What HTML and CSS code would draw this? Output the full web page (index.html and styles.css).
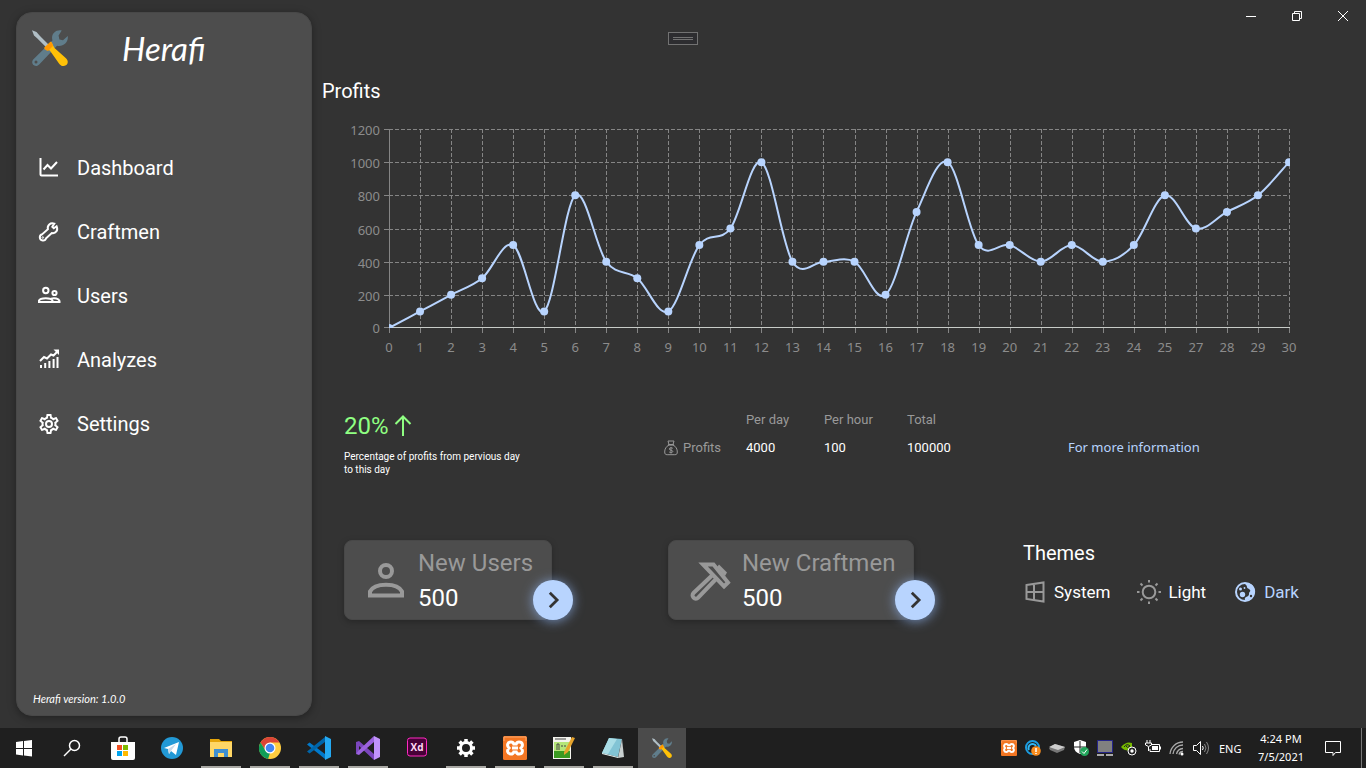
FILE: index.html
```html
<!DOCTYPE html>
<html lang="en">
<head>
<meta charset="utf-8">
<title>Herafi</title>
<link rel="stylesheet" href="styles.css">
</head>
<body>
<svg class="defs" aria-hidden="true">
  <symbol id="tools" viewBox="0 0 36 36">
    <path d="M29.7.4C23.500-.8 18.500 4.500 20.500 10.500L1.200 29.600C-.8 32 .2 35.800 4 36c1.400 0 2.300-.6 3.200-1.500L25 15.700c6 1.400 11.600-3.300 10.800-9.700L31 10.300l-3.600-.9-.8-3.900z" fill="#607d8b"/>
    <circle cx="4" cy="32" r="1.500" fill="#4d4d4d"/>
    <path d="M0 .3L4.500 2 8 6l9 9-2.600 2.600-9-9L2 5.500z" fill="#b0bec5"/>
    <path d="M12.500 17.500l6.500-6 3.500 6.500L33.700 28c3.600 3 2.200 7.600-2 8-2 .1-3.500-.8-4.700-2.600L18 20.800z" fill="#ffc107"/>
    <path d="M12.200 17.800L18.500 11.800c1.500.4 2.200 2.400 2.400 4.200l-4.800 4.900c-2-.3-3.800-1.300-3.900-3.100z" fill="#ff9800"/>
  </symbol>
  <symbol id="xampp" viewBox="0 0 24 24">
    <rect width="24" height="24" rx="1.500" fill="#f37623"/>
    <path d="M1 5V1h22v4" fill="none" stroke="#f9a66c"/>
    <path d="M8 6c-3.800 0-4.300 3.800-2 6-2.300 2.200-1.800 6 2 6 2.200 0 2.800-2 2.800-2h2.400s.6 2 2.800 2c3.800 0 4.300-3.800 2-6 2.300-2.200 1.800-6-2-6-2.200 0-2.800 2-2.800 2h-2.400S10.200 6 8 6zM9 12h6" fill="none" stroke="#fff" stroke-width="3"/>
  </symbol>
  <symbol id="chevron" viewBox="0 0 24 24"><path d="M8.500 4l8 8-8 8" fill="none" stroke="#333" stroke-width="3"/></symbol>
</svg>

<div class="app">
  <aside class="sidebar">
    <div class="brand">
      <svg class="brand-logo"><use href="#tools"/></svg>
      <h1 class="brand-name">Herafi</h1>
    </div>
    <nav class="menu">
      <a class="menu-item" href="#dashboard">
        <svg class="icon" viewBox="0 0 24 24"><path d="M3.500 2v16.500a1 1 0 0 0 1 1H21" stroke-width="2"/><path d="M6.500 13.500l4-4.500 3.500 3.500 6-6.500" stroke-width="2"/></svg>
        <span>Dashboard</span></a>
      <a class="menu-item" href="#craftmen">
        <svg class="icon" viewBox="0 0 24 24"><path d="M19.600 6.300L16.800 8.300 15.300 6.800 17.300 3.600c-4-1.200-7.300 1.600-6.400 5.600L5.300 14.200a3.200 3.200 0 1 0 3.800 4L14.800 13c4 .8 6.600-2.700 4.800-6.700z" stroke-width="2"/><circle cx="5.800" cy="17.500" r=".8"/></svg>
        <span>Craftmen</span></a>
      <a class="menu-item" href="#users">
        <svg class="icon" viewBox="0 0 24 24"><circle cx="8.800" cy="6.500" r="2.700" stroke-width="2"/><circle cx="17.500" cy="9" r="2.100" stroke-width="2"/><path d="M2 18v-1.300c1.200-3.400 12.300-3.400 13.500 0v1.300zM15.500 18H22.500v-1c-.6-2.600-5-3.400-8.500-2.400" stroke-width="2"/></svg>
        <span>Users</span></a>
      <a class="menu-item" href="#analyzes">
        <svg class="icon" viewBox="0 0 24 24"><path d="M4 20v-3M8.200 20v-5M12.400 20v-7M16.600 20V11M20.500 20V9" stroke-width="2"/><path d="M3 13l4-4 3 1.500 4-4 2.500 1 4-4" stroke-width="2"/><path d="M16.500 1.500H22V7z" class="solid"/></svg>
        <span>Analyzes</span></a>
      <a class="menu-item" href="#settings">
        <svg class="icon" viewBox="0 0 24 24"><path class="solid" d="M12 8a4 4 0 0 1 4 4 4 4 0 0 1-4 4 4 4 0 0 1-4-4 4 4 0 0 1 4-4m0 2a2 2 0 0 0-2 2 2 2 0 0 0 2 2 2 2 0 0 0 2-2 2 2 0 0 0-2-2m-2 12c-.25 0-.46-.18-.5-.42l-.37-2.650c-.63-.25-1.170-.59-1.690-.99l-2.490 1.010c-.22.08-.49 0-.61-.22l-2-3.460c-.13-.22-.07-.49.12-.64l2.110-1.660L4.500 12l.07-1-2.110-1.630c-.19-.15-.25-.42-.12-.64l2-3.460c.12-.22.39-.31.61-.22l2.490 1c.52-.39 1.060-.73 1.690-.98l.37-2.650c.04-.24.25-.42.5-.42h4c.25 0 .46.18.5.42l.37 2.650c.63.25 1.170.59 1.690.98l2.490-1c.22-.09.49 0 .61.22l2 3.460c.13.22.07.49-.12.64L19.430 11l.07 1-.07 1 2.110 1.630c.19.15.25.42.12.64l-2 3.460c-.12.22-.39.31-.61.22l-2.490-1c-.52.39-1.060.73-1.690.98l-.37 2.650c-.04.24-.25.42-.5.42h-4m1.250-18-.37 2.610c-1.200.25-2.260.89-3.030 1.780L5.440 7.350l-.75 1.300L6.800 10.200a5.550 5.550 0 0 0 0 3.600l-2.120 1.560.75 1.300 2.430-1.040c.77.88 1.820 1.520 3.010 1.760l.37 2.620h1.520l.37-2.610c1.190-.25 2.240-.89 3.010-1.770l2.430 1.040.75-1.300-2.120-1.550c.4-1.170.4-2.440 0-3.610l2.110-1.550-.75-1.300-2.410 1.040a5.420 5.420 0 0 0-3.030-1.770L12.750 4h-1.500z"/></svg>
        <span>Settings</span></a>
    </nav>
    <p class="version">Herafi version: 1.0.0</p>
  </aside>

  <div class="content">
    <header class="window-bar">
      <button class="window-button" aria-label="Minimize"><svg viewBox="0 0 12 12"><path d="M1 6.500h10"/></svg></button>
      <button class="window-button" aria-label="Restore"><svg viewBox="0 0 12 12"><path d="M1.500 3.500h7v7h-7zM3.500 3.500v-2h7v7h-2"/></svg></button>
      <button class="window-button" aria-label="Close"><svg viewBox="0 0 12 12"><path d="M1 1l10 10M11 1L1 11"/></svg></button>
    </header>

    <main class="dashboard">
      <h2 class="section-title">Profits</h2>
      <svg class="chart" id="chart" role="img" aria-label="Profits chart"></svg>

      <section class="stats">
        <div class="growth">
          <p class="growth-value">20% <svg viewBox="0 0 18 22"><path d="M9 21V2M1.500 9L9 1.500 16.500 9"/></svg></p>
          <p class="growth-note">Percentage of profits from pervious day to this day</p>
        </div>
        <table class="totals">
          <thead><tr><td></td><th scope="col">Per day</th><th scope="col">Per hour</th><th scope="col">Total</th></tr></thead>
          <tbody><tr>
            <th scope="row"><span class="row-label"><svg viewBox="0 0 14 16"><path d="M4 1h6L9 4.500H5zM5 5C2 6.500.7 9 .7 12c0 2 .8 2.700 2.500 2.700h7.600c1.700 0 2.500-.7 2.500-2.700 0-3-1.300-5.500-4.300-7zM4 4.700h6"/><path d="M8.800 8.300C7.500 7.400 5.300 7.800 5.300 9c0 1.500 3.500.9 3.500 2.400 0 1.300-2.300 1.600-3.600.6M7 7v6.500"/></svg>Profits</span></th>
            <td>4000</td><td>100</td><td>100000</td>
          </tr></tbody>
        </table>
        <a class="more" href="#more">For more information</a>
      </section>

      <section class="cards">
        <div class="cell">
          <article class="card">
            <svg class="card-icon" viewBox="0 0 42 42"><circle cx="21" cy="12" r="6"/><path d="M5 36.500v-4c4.500-9 27.500-9 32 0v4z"/></svg>
            <div><h3 class="card-title">New Users</h3><p class="card-value">500</p></div>
            <button class="card-go" aria-label="Open new users"><svg><use href="#chevron"/></svg></button>
          </article>
        </div>
        <div class="cell">
          <article class="card">
            <svg class="card-icon" viewBox="0 0 42 42"><path d="M23 16.500L4.500 34a3.300 3.300 0 0 0 4.700 4.700L27 20"/><path d="M14 5.500H24.500L39 23.500 35 27.500z"/><path class="solid" d="M28 8l2-2.500 8 8L36 17z"/></svg>
            <div><h3 class="card-title">New Craftmen</h3><p class="card-value">500</p></div>
            <button class="card-go" aria-label="Open new craftmen"><svg><use href="#chevron"/></svg></button>
          </article>
        </div>
        <fieldset class="themes">
          <legend class="section-title">Themes</legend>
          <div class="theme-list">
            <label class="theme"><input type="radio" name="theme"><svg class="theme-icon" viewBox="0 0 24 24"><path d="M3.500 5L20.500 2.500v19L3.500 19zM11 4v16M3.500 12h17"/></svg>System</label>
            <label class="theme"><input type="radio" name="theme"><svg class="theme-icon" viewBox="0 0 24 24"><circle cx="12" cy="12" r="6.300"/><path d="M12 0v2.500M12 21.500V24M0 12h2.500M21.500 12H24M3.500 3.500l2 2M18.500 18.500l2 2M3.500 20.500l2-2M18.500 5.500l2-2"/></svg>Light</label>
            <label class="theme"><input type="radio" name="theme" checked><svg class="theme-icon" viewBox="0 0 24 24"><circle cx="12" cy="12" r="9"/><path class="solid" d="M14 3c6 0 9 6 8 10-1 3-3 5.500-7 7-2 1-4 0-3-2s4-1 4-4 2-2 1-4-3-1-3-3-2-2-2-4z"/><circle cx="7.500" cy="9" r="1.500" class="solid"/><circle cx="9.500" cy="14.500" r="2.700" class="solid"/><circle cx="11.500" cy="8" r=".9" class="solid"/><circle cx="18" cy="16" r="1.200" class="hole"/></svg>Dark</label>
          </div>
        </fieldset>
      </section>
    </main>
  </div>
  <div class="drag-handle"></div>
</div>

<footer class="taskbar">
  <button class="task" aria-label="Start"><svg viewBox="0 0 24 24"><path fill="#fff" d="M4 6l7-1v7H4zM12 5l8-1v8h-8zM4 13h7v6.500l-7-1zM12 13h8v7.500L12 19.500z"/></svg></button>
  <button class="task" aria-label="Search"><svg viewBox="0 0 24 24"><g fill="none" stroke="#fff" stroke-width="1.500"><circle cx="14.500" cy="9.500" r="5"/><path d="M11 13l-7 7"/></g></svg></button>
  <div class="apps">
    <button class="task" aria-label="Store"><svg viewBox="0 0 24 24"><path d="M8 6V3q0-2 2-2h4q2 0 2 2v3" fill="none" stroke="#fff" stroke-width="1.500"/><path d="M0 6h24v16q0 2-2 2H2q-2 0-2-2z" fill="#fff"/><path d="M6 9h5v5H6z" fill="#f25022"/><path d="M12 9h5v5h-5z" fill="#7fba00"/><path d="M6 15h5v5H6z" fill="#00a4ef"/><path d="M12 15h5v5h-5z" fill="#ffb900"/></svg></button>
    <button class="task" aria-label="Telegram"><svg viewBox="0 0 24 24"><circle cx="12" cy="12" r="11" fill="#2299d6"/><path d="M4 12l15-6-3 13-5-4-2 3-1-5z" fill="#fff"/><path d="M8 13l8-5-5 7-2 3z" fill="#c8daea"/></svg></button>
    <button class="task open" aria-label="File Explorer"><svg viewBox="0 0 24 24"><path d="M1 3h9l2 2h11v16H1z" fill="#e5a50a"/><path d="M1 6h22v15H1z" fill="#ffd766"/><path d="M5 21v-8h14v8h-4v-4H9v4z" fill="#3f8fd2"/></svg></button>
    <button class="task open" aria-label="Chrome"><svg viewBox="0 0 24 24"><circle cx="12" cy="12" r="11" fill="#ffcd40"/><path d="M2.500 6.500A11 11 0 0 1 21.500 6.500H12L7.500 14.500z" fill="#db4437"/><path d="M2.500 6.500L7.500 14.500 12 17l-2 6A11 11 0 0 1 2.500 6.500z" fill="#0f9d58"/><circle cx="12" cy="12" r="5.500" fill="#fff"/><circle cx="12" cy="12" r="4.300" fill="#4285f4"/></svg></button>
    <button class="task open" aria-label="Visual Studio Code"><svg viewBox="0 0 24 24"><path d="M0 8.500l2.500-2L18 18v5z" fill="#0179cb"/><path d="M0 15.500l2.500 2L18 6V1z" fill="#0065a9"/><path d="M18 0l6 3v18l-6 3z" fill="#24a9f2"/></svg></button>
    <button class="task open" aria-label="Visual Studio"><svg viewBox="0 0 24 24"><path d="M0 6l3-1 15 13v6L3 10v6l-3 2z" fill="#7b46bd"/><path d="M0 18l3 1L18 6V0L3 14z" fill="#9b62de"/><path d="M18 0l6 3v18l-6 3z" fill="#c193fb"/></svg></button>
    <button class="task" aria-label="Adobe XD"><svg class="xd" viewBox="0 0 24 24"><rect x="2.500" y="2" width="19" height="18" rx="2.500" fill="#470137" stroke="#ff2bc2"/><text x="12" y="15">Xd</text></svg></button>
    <button class="task open" aria-label="Settings"><svg viewBox="0 0 24 24"><circle cx="12" cy="12" r="5.500" fill="none" stroke="#fff" stroke-width="3"/><path d="M12 3v3M12 18v3M3 12h3M18 12h3M5.600 5.600l2.200 2.200M16.200 16.200l2.200 2.200M5.600 18.400l2.200-2.200M16.200 7.800l2.200-2.200" stroke="#fff" stroke-width="3.500"/></svg></button>
    <button class="task open" aria-label="XAMPP"><svg><use href="#xampp"/></svg></button>
    <button class="task open" aria-label="Notepad++"><svg viewBox="0 0 24 24"><path d="M1 1h18v22H1z" fill="#f4f4ee"/><path d="M2 6h16v16H2z" fill="#b5e678"/><path d="M2 15h16v7H2z" fill="#3b9a21"/><path d="M3 3h11M5 14V8h2v6M9 10h2M12 10h2" fill="none" stroke="#444"/><path d="M12 16l8-15 3 1-7 14-4 3z" fill="#e6a32c"/></svg></button>
    <button class="task open" aria-label="Notepad"><svg viewBox="0 0 24 24"><path d="M8 2l13 1-4 18L1 17z" fill="#82c4d5"/><path d="M8 2l8 1-9 15-6-1z" fill="#a9dde6"/><path d="M21 3l2 18-6 1z" fill="#c9d0d0"/><path d="M1 17l16 4v1L1 18z" fill="#e8f4f4"/></svg></button>
    <button class="task active" aria-label="Herafi"><svg class="small"><use href="#tools"/></svg></button>
  </div>
  <div class="tray">
    <svg><use href="#xampp"/></svg>
    <svg viewBox="0 0 16 16"><circle cx="7.500" cy="7.500" r="6.500" fill="none" stroke="#1b9de2" stroke-width="2"/><path d="M4 10a4 4 0 1 1 7-4" fill="none" stroke="#2fb8f5" stroke-width="2"/><circle cx="11" cy="11" r="4.800" fill="#f78c1f"/><path d="M11 8v4M11 13v1" stroke="#fff" stroke-width="1.500"/></svg>
    <svg viewBox="0 0 16 16"><path d="M0 8l6-4 10 3-1 3-7 3-7-3z" fill="#777"/><path d="M0 7l6-3 10 3-7 3z" fill="#ccc"/></svg>
    <svg viewBox="0 0 16 16"><path d="M7 0l6 2v5q-1 5-6 7Q1 12 1 7V2z" fill="#fff"/><path d="M7 1v12M1 7h12" stroke="#222"/><circle cx="11.500" cy="11.500" r="4.500" fill="#22a55b"/><path d="M9 11.500l2 2 3-4" fill="none" stroke="#fff"/></svg>
    <svg viewBox="0 0 16 16"><path d="M.5.500h15v12H.5z" fill="#808080" stroke="#24248a"/><path d="M0 14h7v2H0zM9 14h7v2H9z" fill="#aaa"/></svg>
    <svg viewBox="0 0 16 16"><path d="M0 7q5-6 11-4v7q-7 2-11-3z" fill="#76b900"/><path d="M3 7q3-4 6-1-3 3-4 0" fill="none" stroke="#222"/><circle cx="11" cy="11" r="4" fill="#222" stroke="#fff"/><circle cx="11" cy="11" r="1.700" fill="#fff"/></svg>
    <svg viewBox="0 0 16 16"><g fill="none" stroke="#fff"><path d="M6 4.500h8.500v7H5V9M15.500 6.500v3M2 0v3M5 0v3M.5 3h6v2q-3 3-6 0zM3.500 7v4"/></g><path d="M7 6h6v4H7z" fill="#fff"/></svg>
    <svg viewBox="0 0 16 16"><g fill="none" stroke="#aaa" stroke-width="1.300"><path d="M1 14A13 13 0 0 1 14 2M4 14A10 10 0 0 1 14 5M7.500 14A7 7 0 0 1 14 8.500M10 14.500a4 4 0 0 1 4-3"/></g><circle cx="13" cy="14" r="1.500" fill="#fff"/></svg>
    <svg viewBox="0 0 16 16"><g fill="none" stroke="#fff"><path d="M.5 5.500h3l4-4v13l-4-4h-3zM9.500 6q1.500 2 0 4"/><path d="M11.500 4q3 4 0 8M13.500 2q4 6 0 12" stroke="#888"/></g></svg>
  </div>
  <span class="language">ENG</span>
  <time class="clock" datetime="2021-07-05T16:24">4:24 PM<br>7/5/2021</time>
  <button class="notice" aria-label="Notifications"><svg viewBox="0 0 18 18"><path d="M1.500 2.500h15v11h-5l-2.500 3v-3h-7.500z" fill="none" stroke="#fff"/></svg></button>
  <span class="show-desktop"></span>
</footer>
<script src="chart.js"></script>
</body>
</html>
```
FILE: styles.css
```css
* { box-sizing: border-box; }
body {
  margin: 0;
  min-height: 100vh;
  display: flex;
  flex-direction: column;
  background: #333;
  color: #fff;
  font-family: Roboto, sans-serif;
}
h1, h2, h3, p { margin: 0; font-weight: 400; }
button { padding: 0; border: 0; background: none; color: inherit; font: inherit; }
a { color: inherit; text-decoration: none; }
.defs { position: absolute; width: 0; height: 0; }

.app { flex: 1; display: flex; position: relative; }
.drag-handle {
  position: absolute;
  top: 32px;
  left: calc(50% - 15px);
  width: 30px;
  height: 13px;
  border: 1px solid #727272;
  background: #2d2d30;
}
.drag-handle::before {
  content: "";
  display: block;
  height: 1px;
  margin: 4px;
  border: solid #727272;
  border-width: 1px 0;
}

.sidebar {
  flex: none;
  width: 296px;
  margin: 12px 0 12px 16px;
  padding: 15px 15px 8px;
  display: flex;
  flex-direction: column;
  border: 1px solid #484848;
  border-radius: 16px;
  background: #4d4d4d;
  box-shadow: 0 2px 8px rgba(0, 0, 0, .35);
}
.brand { display: flex; align-items: center; height: 40px; gap: 54px; }
.brand-logo { width: 36px; height: 36px; }
.brand-name, .version { font-family: "Segoe Script", Lato, sans-serif; font-style: italic; }
.brand-name { font-size: 33px; }
.version { margin-top: auto; padding-left: 1px; font-size: 11px; line-height: 16px; }
.menu { display: flex; flex-direction: column; gap: 24px; margin-top: 80px; padding-left: 5px; }
.menu-item { display: flex; align-items: center; gap: 16px; height: 40px; font-size: 20px; }
.icon { width: 24px; height: 24px; fill: none; stroke: #fff; }
.icon .solid { fill: #fff; stroke: none; }

.content { flex: 1; min-width: 0; padding-left: 10px; }
.window-bar { display: flex; justify-content: flex-end; height: 32px; }
.window-button { width: 46px; display: grid; place-items: center; }
.window-button svg { width: 12px; height: 12px; fill: none; stroke: #fff; }
.dashboard { padding-top: 47px; }
.section-title { font-size: 20px; line-height: 24px; }
.chart { display: block; width: 100%; height: 240px; margin-top: 16px; font: 13px "Noto Sans", sans-serif; }
.chart text { fill: #8c8c8c; }
.grid-line { stroke: #858585; stroke-dasharray: 4 2; }
.tick { stroke: #858585; }
.base-line { stroke: #c8ccc8; }
.series { fill: none; stroke: #b8d4fe; stroke-width: 2; }
.point { fill: #b8d4fe; }

.stats {
  display: grid;
  grid-template-columns: 320fr 404fr 298fr;
  margin: 52px 0 0 22px;
  min-height: 129px;
}
.growth-value { display: flex; align-items: center; gap: 5px; font-size: 24px; line-height: 30px; color: #8fff82; }
.growth-value svg { width: 18px; height: 22px; fill: none; stroke: currentColor; stroke-width: 2; }
.growth-note { width: 184px; margin-top: 9px; font-size: 10px; line-height: 13px; }
.totals { justify-self: start; align-self: start; border-collapse: collapse; font-size: 13px; line-height: 28px; margin-top: -5px; }
.totals th, .totals td { padding: 0; text-align: left; font-weight: 400; }
.totals th { color: #999; }
.totals th:nth-child(1), .totals td:nth-child(1) { width: 82px; }
.totals th:nth-child(2) { width: 78px; }
.totals th:nth-child(3) { width: 83px; }
.row-label { display: flex; align-items: center; gap: 5px; }
.row-label svg { width: 14px; height: 16px; fill: none; stroke: #999; }
.more { margin-top: 27px; font: 13px/18px "Noto Sans", sans-serif; color: #b8d4fe; }

.cards { display: grid; grid-template-columns: 324fr 355fr 343fr; margin-left: 22px; }
.card {
  position: relative;
  display: inline-flex;
  gap: 11px;
  height: 80px;
  padding: 5px 18px 5px 20px;
  border: 1px solid #484848;
  border-radius: 8px;
  background: #4d4d4d;
  box-shadow: 0 2px 6px rgba(0, 0, 0, .25);
  font-size: 24px;
  line-height: 35px;
}
.card-icon { width: 42px; height: 42px; margin-top: 13px; fill: none; stroke: #999; stroke-width: 4; }
.card-icon .solid { fill: #999; stroke: none; }
.card-title { font-size: 24px; color: #999; }
.card-go {
  position: absolute;
  right: -22px;
  bottom: -1px;
  width: 40px;
  height: 40px;
  display: grid;
  place-items: center;
  border-radius: 50%;
  background: #b8d4fe;
  box-shadow: 0 1px 12px rgba(150, 190, 255, .7);
}
.card-go svg { width: 22px; height: 22px; }
.themes { border: 0; margin: 0; padding: 1px 0 0; min-width: 0; }
.themes .section-title { padding: 1px 0 0; }
.theme-list { display: flex; gap: 27px; margin-top: 14px; }
.theme { display: flex; align-items: center; gap: 7px; height: 24px; font-size: 17px; }
.theme input { position: absolute; opacity: 0; pointer-events: none; }
.theme-icon { width: 24px; height: 24px; fill: none; stroke: #999; stroke-width: 2; }
.theme:has(:checked) { color: #b8d4fe; }
.theme:has(:checked) .theme-icon { stroke: #b8d4fe; }
.theme-icon .solid { fill: #b8d4fe; stroke: none; }
.theme-icon .hole { fill: #333; stroke: none; }

.taskbar { flex: none; display: flex; align-items: center; height: 40px; background: #1f1f1f; font: 11px "Noto Sans", sans-serif; }
.task { position: relative; width: 48px; height: 40px; display: grid; place-items: center; }
.task svg { width: 24px; height: 24px; }
.task .small { width: 20px; height: 20px; }
.xd text { fill: #ffd9f5; font: bold 10px "Open Sans", sans-serif; text-anchor: middle; }
.apps { display: flex; gap: 1px; margin-left: 3px; }
.open::after { content: ""; position: absolute; left: 4px; right: 4px; bottom: 0; height: 2px; background: #a9a8a4; }
.active { background: #4b4b4b; }
.tray { display: flex; gap: 8px; margin-left: auto; }
.tray svg { width: 16px; height: 16px; }
.language { width: 24px; margin-left: 10px; }
.clock { width: 60px; margin-left: 8px; text-align: center; line-height: 18px; }
.notice { width: 18px; height: 18px; margin-left: 13px; }
.notice svg { display: block; width: 18px; height: 18px; }
.show-desktop { width: 5px; height: 40px; margin-left: 19px; border-left: 1px solid #777; }
```
FILE: chart.js
```js
const labels = [0, 1, 2, 3, 4, 5, 6, 7, 8, 9, 10, 11, 12, 13, 14, 15, 16, 17, 18, 19, 20, 21, 22, 23, 24, 25, 27, 28, 29, 30];
const profits = [0, 100, 200, 300, 500, 100, 800, 400, 300, 100, 500, 600, 1000, 400, 400, 400, 200, 700, 1000, 500, 500, 400, 500, 400, 500, 800, 600, 700, 800, 1000];
const MAX = 1200;
const svg = document.getElementById("chart");

// Catmull-Rom spline written as cubic Bezier segments.
function splinePath(p) {
  let d = `M${p[0]}`;
  for (let i = 0; i < p.length - 1; i++) {
    const a = p[i - 1] || p[i], b = p[i], c = p[i + 1], e = p[i + 2] || c;
    const c1 = b.map((v, n) => v + (c[n] - a[n]) / 6);
    const c2 = c.map((v, n) => v - (e[n] - b[n]) / 6);
    d += `C${c1} ${c2} ${c}`;
  }
  return d;
}

function draw() {
  const left = 67, right = svg.clientWidth - 77, top = 10, bottom = 209;
  const x = i => left + i * (right - left) / (labels.length - 1);
  const y = v => bottom - v * (bottom - top) / MAX;
  const snap = v => Math.round(v) + 0.5;
  let out = `<clipPath id="plot"><rect x="${left}" y="0" width="${right - left + 1}" height="${bottom}"/></clipPath>`;
  for (let v = 0; v <= MAX; v += 200) {
    const gy = v ? snap(y(v)) : bottom - 0.5;
    out += `<path class="tick" d="M${left - 5} ${gy}h5"/>`;
    if (v) out += `<path class="grid-line" d="M${left} ${gy}H${right}"/>`;
    out += `<text x="${left - 9}" y="${gy + 5}" text-anchor="end">${v}</text>`;
  }
  labels.forEach((label, i) => {
    const gx = snap(x(i));
    out += `<path class="${i ? "grid-line" : "tick"}" d="M${gx} ${top}V${bottom}"/><path class="tick" d="M${gx} ${bottom}v5"/>`;
    out += `<text x="${x(i)}" y="233" text-anchor="middle">${label}</text>`;
  });
  out += `<path class="base-line" d="M${left} ${bottom - 0.5}H${right + 1}"/>`;
  const points = profits.map((v, i) => [x(i), y(v)]);
  out += `<g clip-path="url(#plot)"><path class="series" d="${splinePath(points)}"/>`;
  for (const [px, py] of points) out += `<circle class="point" cx="${px}" cy="${py}" r="4"/>`;
  svg.innerHTML = out + "</g>";
}
draw();
addEventListener("resize", draw);
```
